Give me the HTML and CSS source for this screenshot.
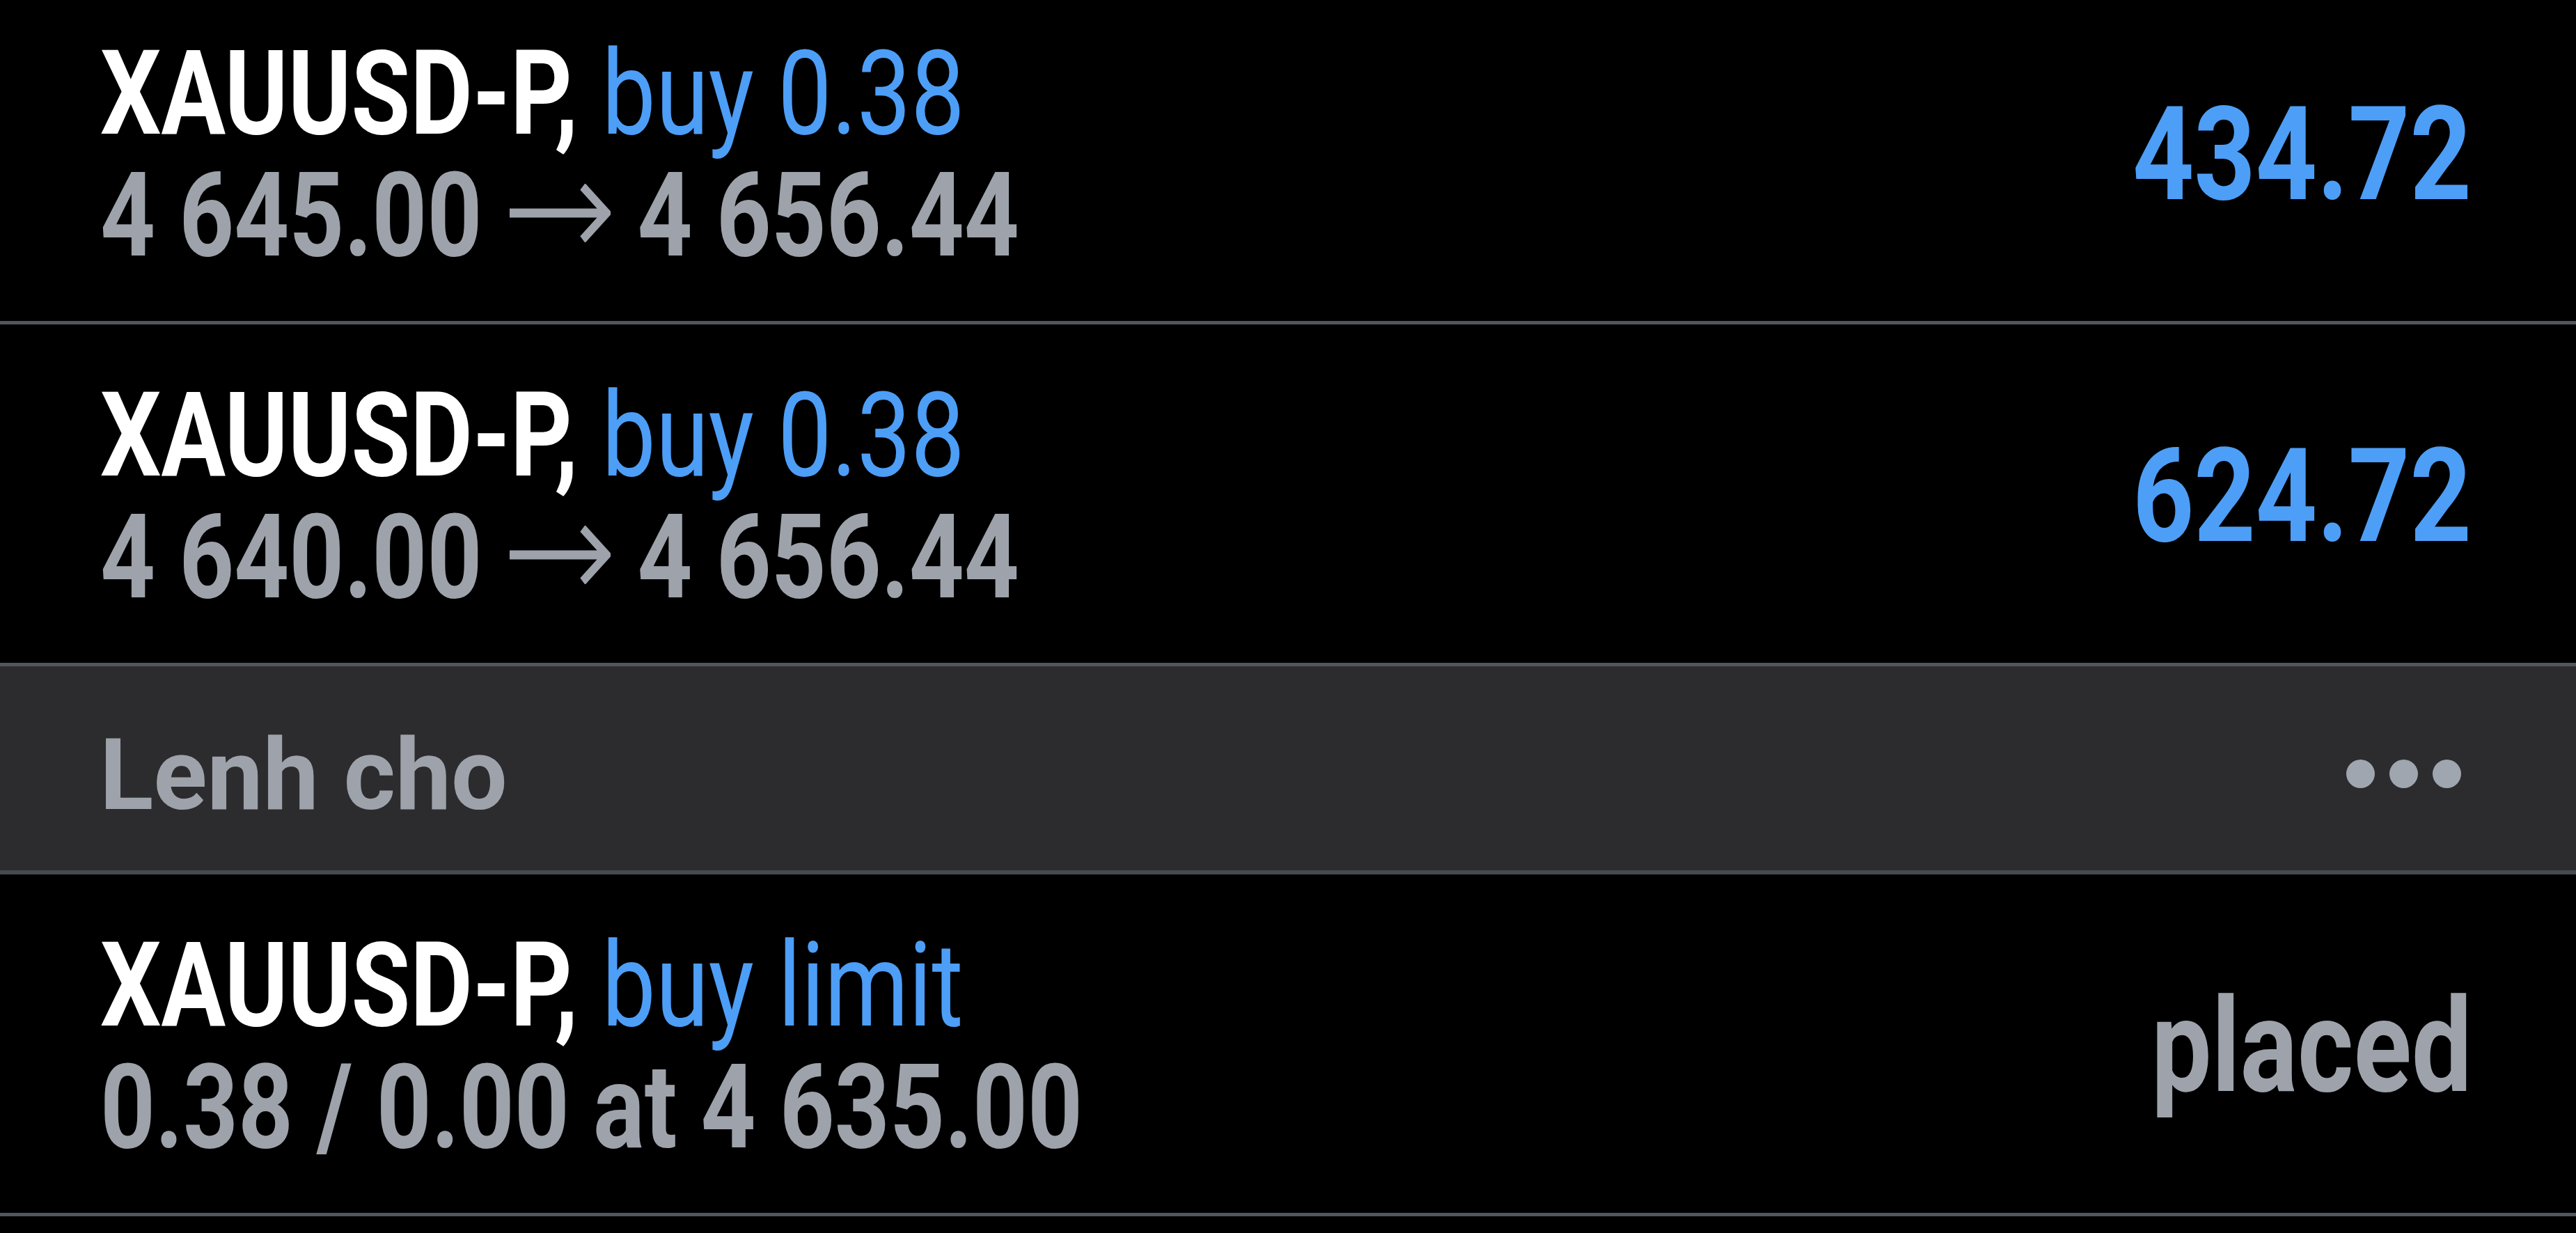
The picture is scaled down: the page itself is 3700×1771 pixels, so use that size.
FILE: index.html
```html
<!DOCTYPE html>
<html lang="en">
<head>
    <meta charset="UTF-8">
    <meta name="viewport" content="width=device-width, initial-scale=1.0">
    <title>Trade</title>
    <link rel="stylesheet" href="styles.css">
</head>
<body>
    <div class="orders">
        <div class="order">
            <div class="order-info">
                <div class="order-title"><span class="symbol">XAUUSD-P,</span> <span class="side">buy 0.38</span></div>
                <div class="order-prices">4 645.00<svg class="arrow" viewBox="0 0 177 84"><path d="M0 42H170M128 4L170 42L128 80"/></svg>4 656.44</div>
            </div>
            <div class="order-value profit">434.72</div>
        </div>
        <div class="order">
            <div class="order-info">
                <div class="order-title"><span class="symbol">XAUUSD-P,</span> <span class="side">buy 0.38</span></div>
                <div class="order-prices">4 640.00<svg class="arrow" viewBox="0 0 177 84"><path d="M0 42H170M128 4L170 42L128 80"/></svg>4 656.44</div>
            </div>
            <div class="order-value profit">624.72</div>
        </div>

        <div class="section-header">
            <span class="section-title">Lenh cho</span>
            <div class="more">
                <span></span>
                <span></span>
                <span></span>
            </div>
        </div>

        <div class="order">
            <div class="order-info">
                <div class="order-title"><span class="symbol">XAUUSD-P,</span> <span class="side">buy limit</span></div>
                <div class="order-prices">0.38 / 0.00 at 4 635.00</div>
            </div>
            <div class="order-value status">placed</div>
        </div>
    </div>
</body>
</html>
```

FILE: styles.css
```css
*,
*:before,
*:after {
    padding: 0;
    margin: 0;
    box-sizing: border-box;
}

body {
    font-family: Roboto, "Liberation Sans", sans-serif;
    background-color: #000;
    color: #fff;
    height: 100vh;
    overflow: hidden;
}

.orders {
    margin-top: -25px;
}

.order {
    display: flex;
    align-items: center;
    justify-content: space-between;
    height: 491px;
    padding: 0 150px 0 144px;
    border-bottom: 5px solid #52565e;
}

.order-info {
    padding-top: 8px;
    transform: scaleX(0.82);
    transform-origin: left center;
    white-space: nowrap;
}

.order-title,
.order-prices {
    font-size: 168px;
    line-height: 175px;
}

.symbol {
    font-weight: 700;
    color: #fff;
}

.side {
    font-weight: 400;
    color: #4d9ef7;
}

.order-prices {
    font-weight: 700;
    color: #9ea3ab;
}

.arrow {
    width: 177px;
    height: 84px;
    margin: 0 47px 0 48px;
    vertical-align: 19px;
    fill: none;
    stroke: #9ea3ab;
    stroke-width: 13;
}

.order-value {
    font-size: 188px;
    line-height: 188px;
    font-weight: 700;
    padding-top: 8px;
    transform: scaleX(0.82);
    transform-origin: right center;
    white-space: nowrap;
}

.profit {
    color: #4d9ef7;
}

.status {
    color: #9ea3ab;
}

.section-header {
    display: flex;
    align-items: center;
    justify-content: space-between;
    height: 299px;
    padding: 20px 165px 0 143px;
    background-color: #2c2c2e;
    border-bottom: 6px solid #474a52;
}

.section-title {
    font-size: 143px;
    line-height: 143px;
    font-weight: 700;
    color: #9ea3ab;
}

.more {
    display: flex;
    gap: 21px;
    margin-top: -4px;
}

.more span {
    display: block;
    width: 41px;
    height: 41px;
    border-radius: 50%;
    background-color: #a0a6b0;
}
```
